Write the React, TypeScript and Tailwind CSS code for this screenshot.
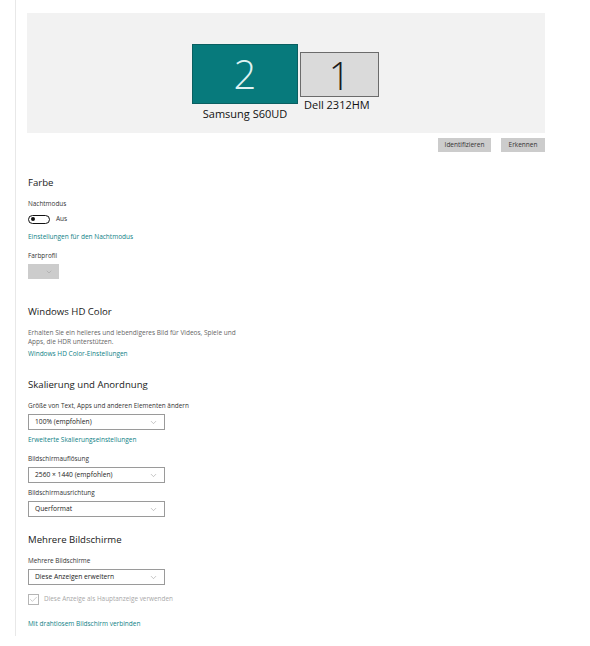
import { Check, ChevronDown } from 'lucide-react'

const font = { fontFamily: '"Open Sans", "Noto Sans", sans-serif' }

function Heading({ children, className = '' }: { children: string; className?: string }) {
    return <div className={`h-[14px] leading-[14px] text-[9.6px] text-[#1a1a1a] ${className}`}>{children}</div>
}

function Label({ children, className = '' }: { children: string; className?: string }) {
    return <div className={`h-[10px] leading-[10px] text-[6.4px] text-[#333] ${className}`}>{children}</div>
}

function LinkText({ children, className = '' }: { children: string; className?: string }) {
    return <div className={`h-[10px] leading-[10px] text-[6.5px] text-[#0f7f86] ${className}`}>{children}</div>
}

function Select({ value, className = '' }: { value: string; className?: string }) {
    return (
        <div className={`w-[137px] h-[16px] border border-[#9a9a9a] bg-white flex items-center justify-between pl-[6px] pr-[6px] ${className}`}>
            <span className="text-[6.7px] text-[#222] leading-none">{value}</span>
            <ChevronDown className="w-[9px] h-[9px] text-[#9a9a9a]" strokeWidth={1.5} />
        </div>
    )
}

export default function App() {
    return (
        <div className="w-[590px] h-[646px] bg-white overflow-hidden" style={font}>
            <div className="ml-[15px] w-[560px] h-[636px] border-l border-[#e8e8e8] pl-[11px] pt-[13px]">
                {/* monitor arrangement canvas */}
                <div className="relative w-[518px] h-[120px] bg-[#f2f2f2]">
                    <div className="absolute left-[165px] top-[31px] w-[106px] h-[60px] bg-[#077a7c] border border-[#0a5f61] flex items-center justify-center">
                        <span className="text-[40px] font-light text-[#dff2f2] leading-none">2</span>
                    </div>
                    <div className="absolute left-[168px] top-[94px] w-[100px] text-center text-[11px] leading-[14px] text-[#111]">Samsung S60UD</div>
                    <div className="absolute left-[273px] top-[39px] w-[79px] h-[45px] bg-[#dadada] border border-[#6b6b6b] flex items-center justify-center">
                        <span className="text-[38px] font-light text-[#1a1a1a] leading-none">1</span>
                    </div>
                    <div className="absolute left-[277px] top-[85px] text-[11px] leading-[14px] text-[#111]">Dell 2312HM</div>
                </div>
                <div className="w-[518px] flex justify-end gap-[10px] mt-[5px]">
                    <div className="w-[53px] h-[14px] bg-[#cccccc] flex items-center justify-center text-[6.5px] text-[#333]">Identifizieren</div>
                    <div className="w-[44px] h-[14px] bg-[#cccccc] flex items-center justify-center text-[6.5px] text-[#333]">Erkennen</div>
                </div>

                <div className="pl-[1px]">
                    <Heading className="mt-[24px]">Farbe</Heading>
                    <Label className="mt-[9px]">Nachtmodus</Label>
                    <div className="mt-[5px] h-[10px] flex items-center gap-[6px]">
                        <div className="w-[22px] h-[9px] rounded-full border-[1.5px] border-[#111] flex items-center pl-[2px]">
                            <div className="w-[4px] h-[4px] rounded-full bg-[#111]" />
                        </div>
                        <span className="text-[6.5px] text-[#333]">Aus</span>
                    </div>
                    <LinkText className="mt-[8px]">Einstellungen für den Nachtmodus</LinkText>
                    <Label className="mt-[9px]">Farbprofil</Label>
                    <div className="mt-[3px] w-[31px] h-[15px] bg-[#cccccc] flex items-center justify-end pr-[6px]">
                        <ChevronDown className="w-[8px] h-[8px] text-[#9c9c9c]" strokeWidth={1.5} />
                    </div>

                    <Heading className="mt-[26px]">Windows HD Color</Heading>
                    <div className="mt-[9px] text-[6.5px] leading-[9px] text-[#666]">
                        Erhalten Sie ein helleres und lebendigeres Bild für Videos, Spiele und
                        <br />
                        Apps, die HDR unterstützen.
                    </div>
                    <LinkText className="mt-[3px]">Windows HD Color-Einstellungen</LinkText>

                    <Heading className="mt-[19px]">Skalierung und Anordnung</Heading>
                    <Label className="mt-[9px]">Größe von Text, Apps und anderen Elementen ändern</Label>
                    <Select className="mt-[3px]" value="100% (empfohlen)" />
                    <LinkText className="mt-[5px]">Erweiterte Skalierungseinstellungen</LinkText>
                    <Label className="mt-[9px]">Bildschirmauflösung</Label>
                    <Select className="mt-[3px]" value="2560 × 1440 (empfohlen)" />
                    <Label className="mt-[5px]">Bildschirmausrichtung</Label>
                    <Select className="mt-[3px]" value="Querformat" />

                    <Heading className="mt-[16px]">Mehrere Bildschirme</Heading>
                    <Label className="mt-[9px]">Mehrere Bildschirme</Label>
                    <Select className="mt-[3px]" value="Diese Anzeigen erweitern" />
                    <div className="mt-[8px] h-[12px] flex items-center gap-[5px]">
                        <div className="w-[11px] h-[11px] border border-[#b5b5b5] flex items-center justify-center">
                            <Check className="w-[9px] h-[9px] text-[#a8a8a8]" strokeWidth={1.5} />
                        </div>
                        <span className="text-[6.4px] text-[#a8a8a8]">Diese Anzeige als Hauptanzeige verwenden</span>
                    </div>
                    <LinkText className="mt-[14px]">Mit drahtlosem Bildschirm verbinden</LinkText>
                </div>
            </div>
        </div>
    )
}
